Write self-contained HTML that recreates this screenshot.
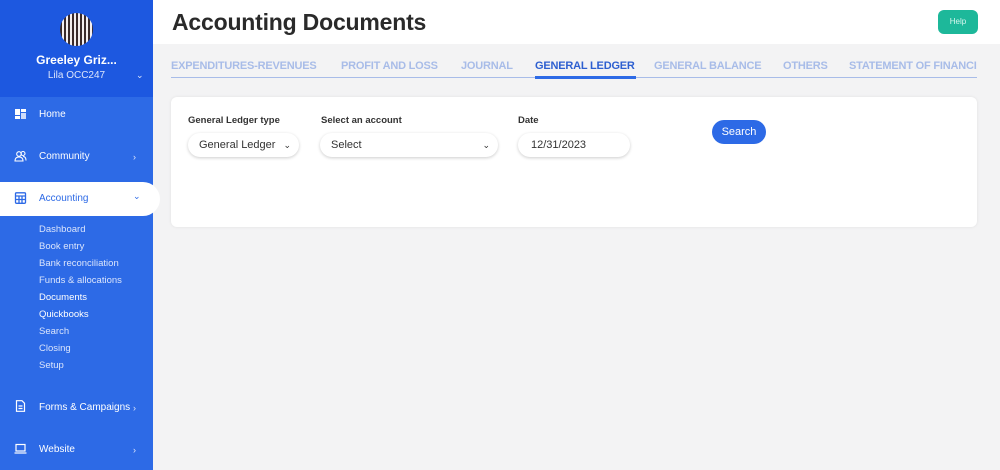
<!DOCTYPE html>
<html><head><style>
*{margin:0;padding:0;box-sizing:border-box}
body{width:1000px;height:470px;overflow:hidden;background:#f3f3f4;font-family:"Liberation Sans",sans-serif;position:relative}
.sb{position:absolute;left:0;top:0;width:153px;height:470px;background:#2d6ae6}
.sbtop{position:absolute;left:0;top:0;width:153px;height:97px;background:#1d58e0}
.logo{position:absolute;left:60px;top:13px;width:33px;height:33px;border-radius:50%;background:repeating-linear-gradient(90deg,#3a2a2a 0 2px,#f4eeee 2px 4px)}
.org{position:absolute;left:0;width:153px;text-align:center;top:53px;color:#fff;font-weight:bold;font-size:12px}
.usr{position:absolute;left:0;width:153px;text-align:center;top:70px;color:#dde6fb;font-size:10px}
.it{position:absolute;left:39px;color:#fff;font-size:10px}
.ic{position:absolute;left:14px;width:13px;height:12px}
.ch{position:absolute;left:133px;color:#dfe7fb;font-size:9px}
.sub{position:absolute;left:39px;color:#dbe5fc;font-size:9.5px}
.pill{position:absolute;left:0;top:182px;width:160px;height:34px;background:#fff;border-radius:0 17px 17px 0}
.hdr{position:absolute;left:153px;top:0;width:847px;height:44px;background:#fff}
h1{position:absolute;left:172px;top:9px;font-size:23px;font-weight:bold;color:#2a2a2a;letter-spacing:-.2px}
.help{position:absolute;left:938px;top:10px;width:40px;height:24px;background:#1db89a;border-radius:6px;color:#d8f7ef;font-size:8px;text-align:center;line-height:24px}
.tabw{position:absolute;left:171px;top:60px;width:806px;height:16px;overflow:hidden}
.tabw span{position:absolute;top:0;font-size:11px;font-weight:bold;color:#a8bce8;white-space:nowrap;letter-spacing:-.2px}
.tl{position:absolute;left:171px;top:77px;width:806px;height:1px;background:#a8bce8}
.ta{position:absolute;left:535px;top:76px;width:101px;height:3px;background:#2d6ae6}
.card{position:absolute;left:171px;top:97px;width:806px;height:130px;background:#fff;border-radius:6px;box-shadow:0 0 3px rgba(0,0,0,.08)}
.lb{position:absolute;font-size:9.5px;font-weight:bold;color:#333}
.sel{position:absolute;top:133px;height:24px;background:#fff;border-radius:12px;box-shadow:0 1px 3px rgba(0,0,0,.2);font-size:11px;color:#333;line-height:24px;padding-left:11px}
.sel i{position:absolute;right:8px;top:0;font-style:normal;font-size:9px}
.btn{position:absolute;left:712px;top:120px;width:54px;height:24px;border-radius:12px;background:#2d6ae6;color:#fff;font-size:11px;text-align:center;line-height:24px}
</style></head><body>
<div class="sb"></div><div class="sbtop"></div>
<div class="logo"></div>
<div class="org">Greeley Griz...</div>
<div class="usr">Lila OCC247</div><div class="ch" style="top:70px;left:136px">⌄</div>
<svg class="ic" style="top:108px" viewBox="0 0 13 12"><rect x="1" y="1" width="5" height="6" fill="#fff"/><rect x="7" y="1" width="5" height="3" fill="#fff"/><rect x="1" y="8" width="5" height="3" fill="#fff"/><rect x="7" y="5" width="5" height="6" fill="#cfdcf9"/></svg>
<div class="it" style="top:109px">Home</div>
<svg class="ic" style="top:150px" viewBox="0 0 13 12" fill="none" stroke="#fff" stroke-width="1.1"><circle cx="5" cy="4" r="2.3"/><path d="M1 11c0-3 2-4 4-4s4 1 4 4z"/><circle cx="9" cy="3.5" r="2"/><path d="M9 6.5c2 0 3 1.5 3 4"/></svg>
<div class="it" style="top:151px">Community</div><div class="ch" style="top:152px">›</div>
<div class="pill"></div>
<svg class="ic" style="top:192px" viewBox="0 0 13 12" fill="none" stroke="#2d6ae6" stroke-width="1.3"><rect x="1.5" y="0.8" width="10" height="10.5" rx="1"/><path d="M1.5 4h10M5 4v7M8 4v7M1.5 7.5h10"/></svg>
<div class="it" style="top:193px;color:#2d6ae6">Accounting</div><div class="ch" style="top:191px;color:#2d6ae6">⌄</div>
<div class="sub" style="top:224px">Dashboard</div>
<div class="sub" style="top:241px">Book entry</div>
<div class="sub" style="top:258px">Bank reconciliation</div>
<div class="sub" style="top:275px">Funds &amp; allocations</div>
<div class="sub" style="top:292px;color:#fff">Documents</div>
<div class="sub" style="top:309px;color:#fff">Quickbooks</div>
<div class="sub" style="top:326px">Search</div>
<div class="sub" style="top:343px">Closing</div>
<div class="sub" style="top:360px">Setup</div>
<svg class="ic" style="top:400px" viewBox="0 0 13 12" fill="none" stroke="#fff" stroke-width="1.2"><path d="M2.5 0.7h5.5l2.5 2.5v8.1h-8z"/><path d="M4.5 6h4M4.5 8.5h4"/></svg>
<div class="it" style="top:402px">Forms &amp; Campaigns</div><div class="ch" style="top:403px">›</div>
<svg class="ic" style="top:443px" viewBox="0 0 13 12" fill="none" stroke="#fff" stroke-width="1.2"><rect x="2" y="1.5" width="9" height="6.5"/><path d="M0.5 10h12"/></svg>
<div class="it" style="top:444px">Website</div><div class="ch" style="top:445px">›</div>

<div class="hdr"></div>
<h1>Accounting Documents</h1>
<div class="help">Help</div>
<div class="tabw">
<span style="left:0">EXPENDITURES-REVENUES</span>
<span style="left:170px">PROFIT AND LOSS</span>
<span style="left:290px">JOURNAL</span>
<span style="left:364px;color:#2d5fd0">GENERAL LEDGER</span>
<span style="left:483px">GENERAL BALANCE</span>
<span style="left:612px">OTHERS</span>
<span style="left:678px">STATEMENT OF FINANCIAL POSITION</span>
</div>
<div class="tl"></div><div class="ta"></div>
<div class="card"></div>
<div class="lb" style="left:188px;top:115px">General Ledger type</div>
<div class="lb" style="left:321px;top:115px">Select an account</div>
<div class="lb" style="left:518px;top:115px">Date</div>
<div class="sel" style="left:188px;width:111px">General Ledger<i>⌄</i></div>
<div class="sel" style="left:320px;width:178px">Select<i>⌄</i></div>
<div class="sel" style="left:518px;width:112px;padding-left:13px">12/31/2023</div>
<div class="btn">Search</div>
</body></html>
